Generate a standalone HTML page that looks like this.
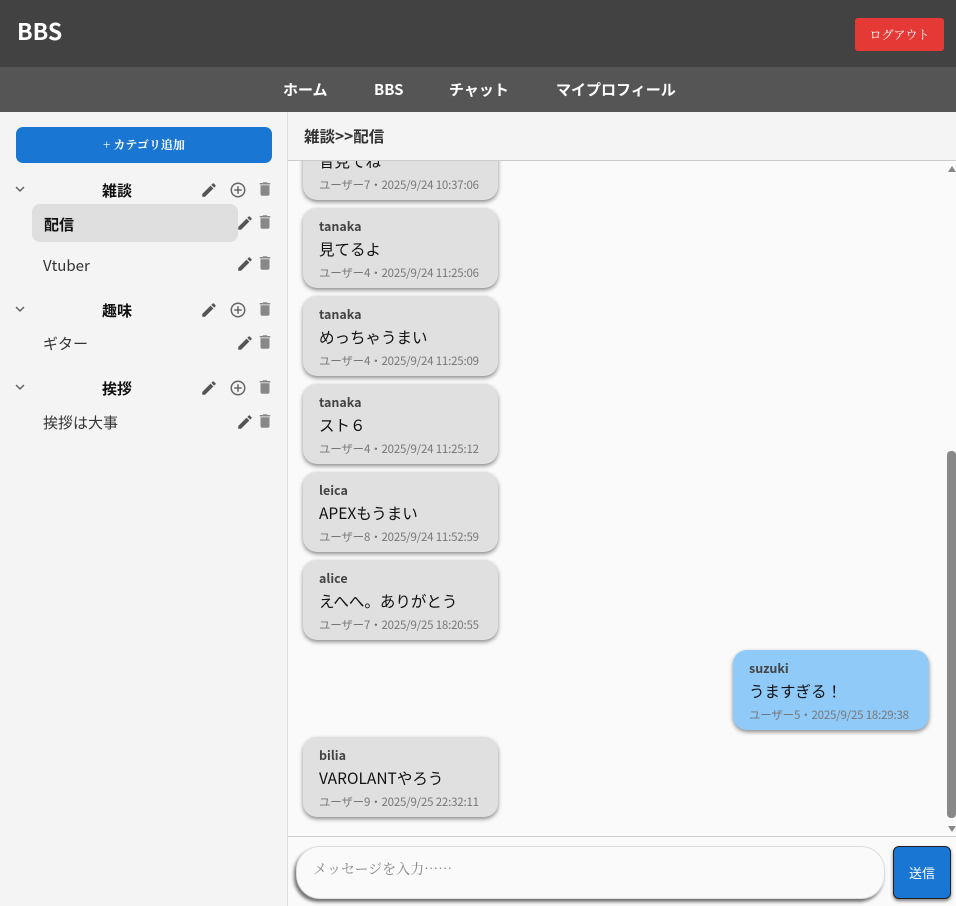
<!DOCTYPE html>
<html><head><meta charset="utf-8"><style>
*{box-sizing:border-box;margin:0;padding:0}
body{width:956px;height:906px;overflow:hidden;position:relative;background:#fafafa;font-family:"Noto Sans CJK JP","Liberation Sans",sans-serif;color:#222;line-height:1.2}
.a{position:absolute}
#hdr{left:0;top:0;width:956px;height:67px;background:#424242}
#nav{left:0;top:67px;width:956px;height:45px;background:#555}
.nv{top:81px;color:#fff;font-size:15px;font-weight:bold}
#side{left:0;top:112px;width:288px;height:794px;background:#f4f4f4;border-right:1px solid #ddd}
.cat{font-size:15px;font-weight:bold;color:#111}
.sub{font-size:15px;color:#333}
.ic{position:absolute;width:18px;height:18px}
.bub{position:absolute;left:303px;width:195px;height:80px;background:#e0e0e0;border-radius:14px;box-shadow:0 2px 4px rgba(0,0,0,.45);padding:8px 16px}
.bub .n{font-size:12.5px;font-weight:bold;color:#444;height:20px;line-height:20px}
.bub .t{font-size:15.5px;color:#111;height:26px;line-height:26px}
.bub .m{font-size:11.5px;color:#777;line-height:22px;white-space:nowrap;letter-spacing:-0.2px}
</style></head><body>
<div id="hdr" class="a"></div>
<div class="a" style="left:17px;top:17px;color:#fff;font-size:23px;font-weight:bold">BBS</div>
<div class="a" style="left:855px;top:18px;width:89px;height:33px;background:#e53935;border-radius:3px;color:#fff;font-size:12px;text-align:center;line-height:33px;font-family:'Noto Serif CJK SC',serif">ログアウト</div>
<div id="nav" class="a"></div>
<div class="a nv" style="left:283px">ホーム</div>
<div class="a nv" style="left:374px">BBS</div>
<div class="a nv" style="left:449px">チャット</div>
<div class="a nv" style="left:556px">マイプロフィール</div>

<div id="side" class="a"></div>
<div class="a" style="left:16px;top:127px;width:256px;height:36px;background:#1976d2;border-radius:7px;color:#fff;font-size:12px;font-weight:bold;text-align:center;line-height:36px;font-family:'Noto Serif CJK SC',serif">+ カテゴリ追加</div>
<div class="a" style="left:32px;top:204px;width:206px;height:38px;background:#dedede;border-radius:8px"></div>

<svg width="0" height="0" style="position:absolute"><defs>
<symbol id="ed" viewBox="0 0 24 24"><path fill="#555" d="M3 17.25V21h3.75L17.81 9.94l-3.75-3.75L3 17.25zM20.71 7.04c.39-.39.39-1.02 0-1.41l-2.34-2.34a1 1 0 0 0-1.41 0l-1.83 1.83 3.75 3.75 1.83-1.83z"/></symbol>
<symbol id="ad" viewBox="0 0 24 24"><path fill="#666" d="M13 7h-2v4H7v2h4v4h2v-4h4v-2h-4V7zm-1-5C6.48 2 2 6.48 2 12s4.48 10 10 10 10-4.48 10-10S17.52 2 12 2zm0 18c-4.41 0-8-3.59-8-8s3.59-8 8-8 8 3.59 8 8-3.59 8-8 8z"/></symbol>
<symbol id="dl" viewBox="0 0 24 24"><path fill="#888" d="M6 19c0 1.1.9 2 2 2h8c1.1 0 2-.9 2-2V7H6v12zM19 4h-3.5l-1-1h-5l-1 1H5v2h14V4z"/></symbol>
<symbol id="ex" viewBox="0 0 24 24"><path fill="#666" d="M16.59 8.59L12 13.17 7.41 8.59 6 10l6 6 6-6z"/></symbol>
</defs></svg>

<svg class="ic" style="left:11px;top:180px"><use href="#ex"/></svg>
<div class="a cat" style="left:102px;top:182px">雑談</div>
<svg class="ic" style="left:200px;top:181px"><use href="#ed"/></svg>
<svg class="ic" style="left:229px;top:181px"><use href="#ad"/></svg>
<svg class="ic" style="left:256px;top:180px"><use href="#dl"/></svg>
<div class="a cat" style="left:44px;top:216px">配信</div>
<svg class="ic" style="left:236px;top:214px"><use href="#ed"/></svg>
<svg class="ic" style="left:256px;top:213px"><use href="#dl"/></svg>
<div class="a sub" style="left:43px;top:257px">Vtuber</div>
<svg class="ic" style="left:236px;top:255px"><use href="#ed"/></svg>
<svg class="ic" style="left:256px;top:254px"><use href="#dl"/></svg>

<svg class="ic" style="left:11px;top:300px"><use href="#ex"/></svg>
<div class="a cat" style="left:102px;top:302px">趣味</div>
<svg class="ic" style="left:200px;top:301px"><use href="#ed"/></svg>
<svg class="ic" style="left:229px;top:301px"><use href="#ad"/></svg>
<svg class="ic" style="left:256px;top:300px"><use href="#dl"/></svg>
<div class="a sub" style="left:43px;top:335px">ギター</div>
<svg class="ic" style="left:236px;top:334px"><use href="#ed"/></svg>
<svg class="ic" style="left:256px;top:333px"><use href="#dl"/></svg>

<svg class="ic" style="left:11px;top:378px"><use href="#ex"/></svg>
<div class="a cat" style="left:102px;top:380px">挨拶</div>
<svg class="ic" style="left:200px;top:379px"><use href="#ed"/></svg>
<svg class="ic" style="left:229px;top:379px"><use href="#ad"/></svg>
<svg class="ic" style="left:256px;top:378px"><use href="#dl"/></svg>
<div class="a sub" style="left:43px;top:414px">挨拶は大事</div>
<svg class="ic" style="left:236px;top:413px"><use href="#ed"/></svg>
<svg class="ic" style="left:256px;top:412px"><use href="#dl"/></svg>

<div class="bub" style="top:120px"><div class="n"></div><div class="t">昔見てね</div><div class="m">ユーザー7・2025/9/24 10:37:06</div></div>
<div class="bub" style="top:208px"><div class="n">tanaka</div><div class="t">見てるよ</div><div class="m">ユーザー4・2025/9/24 11:25:06</div></div>
<div class="bub" style="top:296px"><div class="n">tanaka</div><div class="t">めっちゃうまい</div><div class="m">ユーザー4・2025/9/24 11:25:09</div></div>
<div class="bub" style="top:384px"><div class="n">tanaka</div><div class="t">スト６</div><div class="m">ユーザー4・2025/9/24 11:25:12</div></div>
<div class="bub" style="top:472px"><div class="n">leica</div><div class="t">APEXもうまい</div><div class="m">ユーザー8・2025/9/24 11:52:59</div></div>
<div class="bub" style="top:560px"><div class="n">alice</div><div class="t">えへへ。ありがとう</div><div class="m">ユーザー7・2025/9/25 18:20:55</div></div>
<div class="bub" style="top:650px;left:733px;width:196px;background:#90caf9"><div class="n">suzuki</div><div class="t">うますぎる！</div><div class="m">ユーザー5・2025/9/25 18:29:38</div></div>
<div class="bub" style="top:737px"><div class="n">bilia</div><div class="t">VAROLANTやろう</div><div class="m">ユーザー9・2025/9/25 22:32:11</div></div>

<div class="a" style="left:288px;top:112px;width:668px;height:49px;background:#f4f4f4;border-bottom:1px solid #ccc"></div>
<div class="a" style="left:304px;top:127px;font-size:15.5px;font-weight:bold;color:#333">雑談&gt;&gt;配信</div>

<div class="a" style="left:948px;top:166px;width:0;height:0;border-left:4px solid transparent;border-right:4px solid transparent;border-bottom:6px solid #888"></div>
<div class="a" style="left:947px;top:451px;width:9px;height:367px;background:#888;border-radius:4px"></div>
<div class="a" style="left:948px;top:826px;width:0;height:0;border-left:4px solid transparent;border-right:4px solid transparent;border-top:6px solid #888"></div>

<div class="a" style="left:288px;top:836px;width:668px;height:70px;background:#fafafa;border-top:1px solid #ccc"></div>
<div class="a" style="left:296px;top:846px;width:589px;height:53px;background:#fafafa;border:1px solid #ddd;border-radius:24px;box-shadow:-2px 3px 3px rgba(0,0,0,.55)"></div>
<div class="a" style="left:313px;top:861px;font-size:14px;color:#888;font-family:'Noto Serif CJK SC',serif">メッセージを入力……</div>
<div class="a" style="left:893px;top:846px;width:58px;height:53px;background:#1976d2;border-radius:6px;border:1px solid #222;box-shadow:0 2px 3px rgba(0,0,0,.5);color:#fff;font-size:13px;text-align:center;line-height:51px">送信</div>
</body></html>
